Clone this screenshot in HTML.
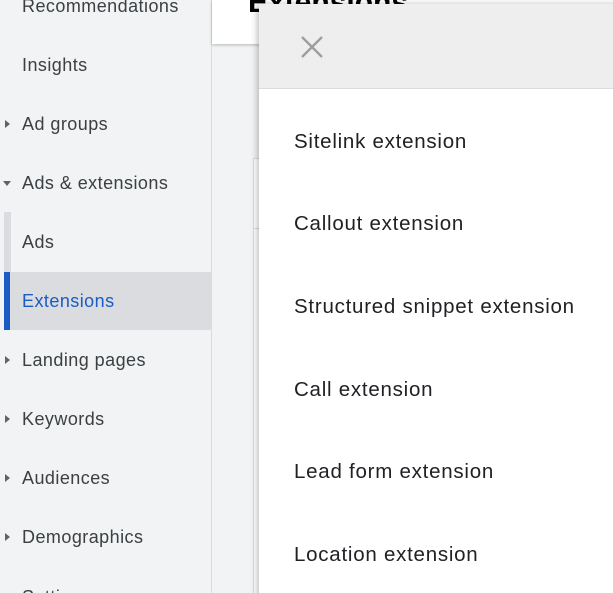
<!DOCTYPE html>
<html><head><style>
html,body{margin:0;width:613px;height:593px;overflow:hidden}
body{background:#f1f3f4;font-family:"Liberation Sans",Roboto,sans-serif;position:relative}
.side{position:absolute;left:0;top:0;width:211px;height:593px;background:#f1f3f4;border-right:1px solid #dadce0}
.it{position:absolute;left:22px;font-size:18px;color:#3c4043;line-height:20px;letter-spacing:0.45px;white-space:nowrap}
.tri{position:absolute;left:5px;width:0;height:0}
.tr{border-top:4px solid transparent;border-bottom:4px solid transparent;border-left:5px solid #5f6368}
.td{border-left:4px solid transparent;border-right:4px solid transparent;border-top:5px solid #5f6368}
.hdr{position:absolute;left:212px;top:0;width:401px;height:44px;background:#fff;box-shadow:0 1px 3px rgba(0,0,0,.25)}
.card{position:absolute;left:253px;top:158px;width:360px;height:440px;background:#fff;border:1px solid #dadce0}
.panel{position:absolute;left:259px;top:4px;width:360px;height:600px;background:#fff;box-shadow:-2px 0 6px rgba(0,0,0,.25)}
.ph{height:84px;background:#eeeeee;border-bottom:1px solid #dadce0;position:relative}
.row{position:absolute;left:35px;font-size:20.5px;color:#202124;line-height:24px;letter-spacing:0.75px;white-space:nowrap}
</style></head><body>
<div class="side">
<div style="position:absolute;left:4px;top:212px;width:7px;height:60px;background:#dadce0"></div>
<div style="position:absolute;left:4px;top:272px;width:207px;height:58px;background:#dadce0"></div>
<div style="position:absolute;left:4px;top:272px;width:6px;height:58px;background:#1a5bc4"></div>
<div class="it" style="top:-4px">Recommendations</div>
<div class="it" style="top:55px">Insights</div>
<div class="tri tr" style="top:120px"></div><div class="it" style="top:114px">Ad groups</div>
<div class="tri td" style="top:181px;left:3px"></div><div class="it" style="top:173px">Ads &amp; extensions</div>
<div class="it" style="top:232px">Ads</div>
<div class="it" style="top:291px;color:#1a5bc4">Extensions</div>
<div class="tri tr" style="top:356px"></div><div class="it" style="top:350px">Landing pages</div>
<div class="tri tr" style="top:415px"></div><div class="it" style="top:409px">Keywords</div>
<div class="tri tr" style="top:474px"></div><div class="it" style="top:468px">Audiences</div>
<div class="tri tr" style="top:533px"></div><div class="it" style="top:527px">Demographics</div>
<div class="it" style="top:587px">Settings</div>
</div>
<div class="hdr"><div style="position:absolute;left:36px;top:-14px;font-size:30px;font-weight:bold;color:#000">Extensions</div></div>
<div class="card"><div style="position:absolute;left:0;top:69px;width:100%;border-top:1px solid #dadce0"></div></div>
<div class="panel">
<div class="ph"><svg style="position:absolute;left:42px;top:32px" width="22" height="22" viewBox="0 0 22 22"><path d="M1 1L21 21M21 1L1 21" stroke="#9e9e9e" stroke-width="2.4"/></svg></div>
<div class="row" style="top:126px">Sitelink extension</div>
<div class="row" style="top:208px">Callout extension</div>
<div class="row" style="top:291px">Structured snippet extension</div>
<div class="row" style="top:374px">Call extension</div>
<div class="row" style="top:456px">Lead form extension</div>
<div class="row" style="top:539px">Location extension</div>
</div>
</body></html>
